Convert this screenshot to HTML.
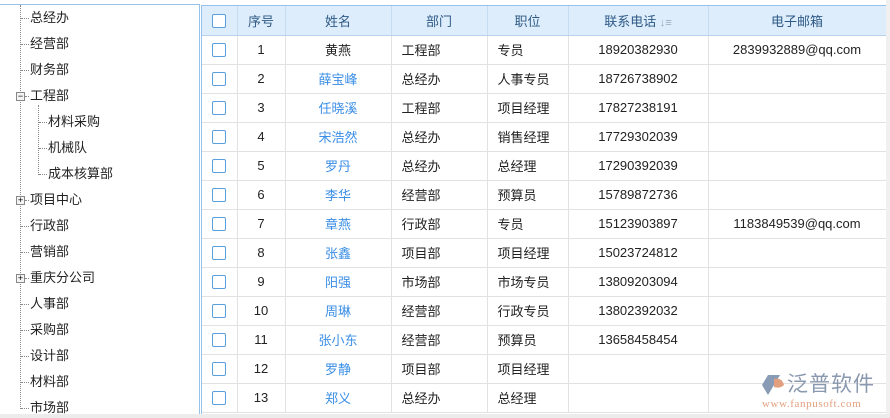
<!DOCTYPE html>
<html style="width:890px;height:418px;overflow:hidden"><head><meta charset="utf-8"><style>
*{margin:0;padding:0;box-sizing:border-box}
body{width:890px;height:418px;overflow:hidden;background:#fff;font-family:"Liberation Sans","Noto Sans CJK SC",sans-serif;font-size:13px;color:#222;position:relative}
#left{position:absolute;left:0;top:4px;width:200px;height:410px;border-right:1px solid #99c2ea;border-top:1px solid #99c2ea}
.t{position:absolute;font-size:13px;color:#222;line-height:16px;white-space:nowrap}
.vl{position:absolute;border-left:1px dotted #888}
.hl{position:absolute;border-top:1px dotted #888;height:0}
.pm{position:absolute;width:9px;height:9px;border:1px solid #888;background:#f4f4f4;font-size:9px;line-height:7px;text-align:center;color:#000}
#tbl{position:absolute;left:201px;top:5px;width:685px;height:409px;border-left:1px solid #99c2ea;border-top:1px solid #99c2ea;overflow:hidden}
table{border-collapse:collapse;table-layout:fixed;width:684px}
td,th{border-right:1px solid #e2e2e2;border-bottom:1px solid #e2e2e2;height:29px;font-weight:normal;white-space:nowrap;overflow:hidden}
th{background:#deedfb;color:#2e5a86;border-right:1px solid #c5dcf1;border-bottom:1px solid #b8d3ee;height:29px}
td.c{text-align:center}
td.l{padding-left:10px}
.cb{display:inline-block;width:14px;height:14px;border:1px solid #5aa0dd;border-radius:2px;background:#fff;vertical-align:middle}
.b{color:#3a8ee6}
#bot{position:absolute;left:0;top:414px;width:890px;height:4px;background:#ececec}
#sb{position:absolute;left:886px;top:0;width:4px;height:414px;background:#f0f0f0}
</style></head><body>
<div id="left">
<div class="vl" style="left:20px;top:0;height:404px"></div>
<div class="vl" style="left:38px;top:100px;height:70px"></div>
</div>
<div style="position:absolute;left:0;top:0;width:199px;height:414px;overflow:hidden">
<div class="hl" style="left:21px;top:18px;width:8px"></div><div class="t" style="left:30px;top:10px">总经办</div>
<div class="hl" style="left:21px;top:44px;width:8px"></div><div class="t" style="left:30px;top:36px">经营部</div>
<div class="hl" style="left:21px;top:70px;width:8px"></div><div class="t" style="left:30px;top:62px">财务部</div>
<div class="pm" style="left:16px;top:92px">−</div><div class="hl" style="left:25px;top:96px;width:4px"></div><div class="t" style="left:30px;top:88px">工程部</div>
<div class="hl" style="left:39px;top:122px;width:8px"></div><div class="t" style="left:48px;top:114px">材料采购</div>
<div class="hl" style="left:39px;top:148px;width:8px"></div><div class="t" style="left:48px;top:140px">机械队</div>
<div class="hl" style="left:39px;top:174px;width:8px"></div><div class="t" style="left:48px;top:166px">成本核算部</div>
<div class="pm" style="left:16px;top:196px">+</div><div class="hl" style="left:25px;top:200px;width:4px"></div><div class="t" style="left:30px;top:192px">项目中心</div>
<div class="hl" style="left:21px;top:226px;width:8px"></div><div class="t" style="left:30px;top:218px">行政部</div>
<div class="hl" style="left:21px;top:252px;width:8px"></div><div class="t" style="left:30px;top:244px">营销部</div>
<div class="pm" style="left:16px;top:274px">+</div><div class="hl" style="left:25px;top:278px;width:4px"></div><div class="t" style="left:30px;top:270px">重庆分公司</div>
<div class="hl" style="left:21px;top:304px;width:8px"></div><div class="t" style="left:30px;top:296px">人事部</div>
<div class="hl" style="left:21px;top:330px;width:8px"></div><div class="t" style="left:30px;top:322px">采购部</div>
<div class="hl" style="left:21px;top:356px;width:8px"></div><div class="t" style="left:30px;top:348px">设计部</div>
<div class="hl" style="left:21px;top:382px;width:8px"></div><div class="t" style="left:30px;top:374px">材料部</div>
<div class="hl" style="left:21px;top:408px;width:8px"></div><div class="t" style="left:30px;top:400px">市场部</div>
</div>
<div id="tbl"><table>
<colgroup><col style="width:35px"><col style="width:48px"><col style="width:106px"><col style="width:96px"><col style="width:81px"><col style="width:140px"><col style="width:178px"></colgroup>
<tr><th><span class="cb"></span></th><th>序号</th><th>姓名</th><th>部门</th><th>职位</th><th>联系电话 <span style="color:#9ab;font-size:11px">↓&#8801;</span></th><th>电子邮箱</th></tr>
<tr><td class="c"><span class="cb"></span></td><td class="c">1</td><td class="c">黄燕</td><td class="l">工程部</td><td class="l">专员</td><td class="c">18920382930</td><td class="c">2839932889@qq.com</td></tr>
<tr><td class="c"><span class="cb"></span></td><td class="c">2</td><td class="c b">薛宝峰</td><td class="l">总经办</td><td class="l">人事专员</td><td class="c">18726738902</td><td></td></tr>
<tr><td class="c"><span class="cb"></span></td><td class="c">3</td><td class="c b">任晓溪</td><td class="l">工程部</td><td class="l">项目经理</td><td class="c">17827238191</td><td></td></tr>
<tr><td class="c"><span class="cb"></span></td><td class="c">4</td><td class="c b">宋浩然</td><td class="l">总经办</td><td class="l">销售经理</td><td class="c">17729302039</td><td></td></tr>
<tr><td class="c"><span class="cb"></span></td><td class="c">5</td><td class="c b">罗丹</td><td class="l">总经办</td><td class="l">总经理</td><td class="c">17290392039</td><td></td></tr>
<tr><td class="c"><span class="cb"></span></td><td class="c">6</td><td class="c b">李华</td><td class="l">经营部</td><td class="l">预算员</td><td class="c">15789872736</td><td></td></tr>
<tr><td class="c"><span class="cb"></span></td><td class="c">7</td><td class="c b">章燕</td><td class="l">行政部</td><td class="l">专员</td><td class="c">15123903897</td><td class="c">1183849539@qq.com</td></tr>
<tr><td class="c"><span class="cb"></span></td><td class="c">8</td><td class="c b">张鑫</td><td class="l">项目部</td><td class="l">项目经理</td><td class="c">15023724812</td><td></td></tr>
<tr><td class="c"><span class="cb"></span></td><td class="c">9</td><td class="c b">阳强</td><td class="l">市场部</td><td class="l">市场专员</td><td class="c">13809203094</td><td></td></tr>
<tr><td class="c"><span class="cb"></span></td><td class="c">10</td><td class="c b">周琳</td><td class="l">经营部</td><td class="l">行政专员</td><td class="c">13802392032</td><td></td></tr>
<tr><td class="c"><span class="cb"></span></td><td class="c">11</td><td class="c b">张小东</td><td class="l">经营部</td><td class="l">预算员</td><td class="c">13658458454</td><td></td></tr>
<tr><td class="c"><span class="cb"></span></td><td class="c">12</td><td class="c b">罗静</td><td class="l">项目部</td><td class="l">项目经理</td><td class="c"></td><td></td></tr>
<tr><td class="c"><span class="cb"></span></td><td class="c">13</td><td class="c b">郑义</td><td class="l">总经办</td><td class="l">总经理</td><td class="c"></td><td></td></tr>
</table></div>
<div id="sb"></div>
<div id="bot"></div>
<svg style="position:absolute;left:760px;top:373px" width="28" height="24" viewBox="0 0 28 24">
<path d="M8 2 L20 2 L14 12 L8 22 L2 12 Z" fill="#8a9bb5"/>
<path d="M14 6 Q22 4 24 12 Q20 16 14 14 Z" fill="#e3a07e"/>
</svg>
<div style="position:absolute;left:787px;top:371px;font-size:21px;color:#8a99b0;letter-spacing:1px;line-height:24px;font-family:'Noto Sans CJK SC',sans-serif;white-space:nowrap">泛普软件</div>
<div style="position:absolute;left:762px;top:398px;font-size:11px;color:#e3a07e;font-family:'Liberation Serif',serif;letter-spacing:0.6px;line-height:12px;white-space:nowrap">www.fanpusoft.com</div>
</body></html>
